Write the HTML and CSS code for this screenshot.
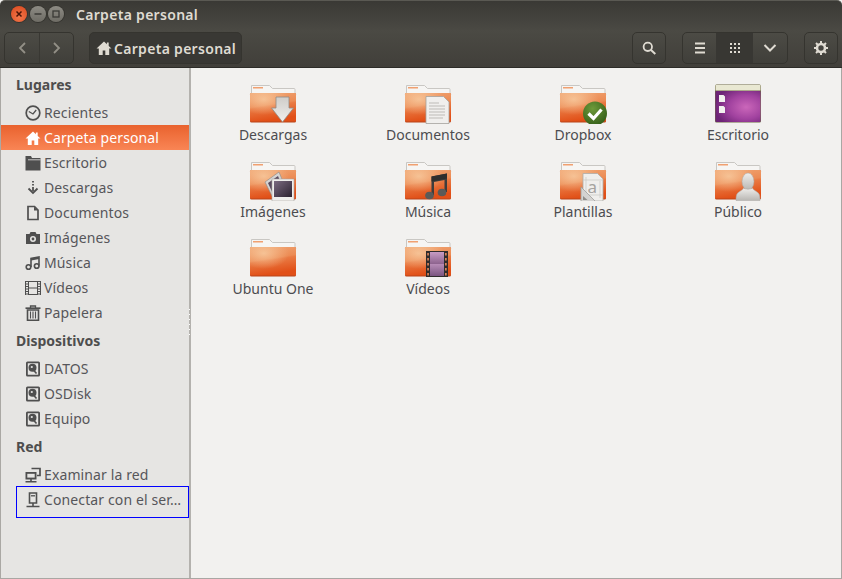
FILE: index.html
```html
<!DOCTYPE html>
<html lang="es">
<head>
<meta charset="utf-8">
<title>Carpeta personal</title>
<link rel="stylesheet" href="styles.css">
</head>
<body>
<svg class="defs" aria-hidden="true">
  <defs>
    <linearGradient id="fBody" x1="0" y1="0" x2=".25" y2="1">
      <stop offset="0" stop-color="#f0a674"/>
      <stop offset=".48" stop-color="#ec8b54"/>
      <stop offset=".54" stop-color="#e97a43"/>
      <stop offset="1" stop-color="#e14f17"/>
    </linearGradient>
    <radialGradient id="fGlow" cx=".3" cy=".22" r=".55">
      <stop offset="0" stop-color="#f8cda2" stop-opacity=".8"/>
      <stop offset="1" stop-color="#f8c79a" stop-opacity="0"/>
    </radialGradient>
    <radialGradient id="desk" cx=".68" cy=".52" r=".7">
      <stop offset="0" stop-color="#cb67ba"/>
      <stop offset=".55" stop-color="#a1429f"/>
      <stop offset="1" stop-color="#6d2476"/>
    </radialGradient>
    <linearGradient id="film" x1="0" y1="0" x2="0" y2="1">
      <stop offset="0" stop-color="#c79bc4"/>
      <stop offset=".48" stop-color="#8f6590"/>
      <stop offset=".52" stop-color="#b58ab5"/>
      <stop offset="1" stop-color="#7a5480"/>
    </linearGradient>
    <linearGradient id="photo" x1="0" y1="0" x2="1" y2="1">
      <stop offset="0" stop-color="#7b6a80"/>
      <stop offset="1" stop-color="#2b2230"/>
    </linearGradient>
    <linearGradient id="arrow" x1="0" y1="0" x2="0" y2="1">
      <stop offset="0" stop-color="#cfcdc9"/>
      <stop offset="1" stop-color="#f0efec"/>
    </linearGradient>
    <linearGradient id="bust" x1="0" y1="0" x2="0" y2="1">
      <stop offset="0" stop-color="#efeeec"/>
      <stop offset="1" stop-color="#b9b7b3"/>
    </linearGradient>
    <radialGradient id="green" cx=".4" cy=".3" r=".8">
      <stop offset="0" stop-color="#6e9a3a"/>
      <stop offset="1" stop-color="#2f5a16"/>
    </radialGradient>
    <symbol id="folder" viewBox="0 0 48 40">
      <path d="M2.500 1.500h18l3 3h21.500a1 1 0 0 1 1 1V12h-43.500z" fill="#f6f5f3" stroke="#c9c7c3"/>
      <rect x="4" y="3" width="10" height="1.500" fill="#f0a070"/>
      <rect x="1" y="9" width="46" height="29.500" rx="1.500" fill="#b8451a"/>
      <rect x="1" y="9" width="46" height="28.500" rx="1" fill="url(#fBody)"/>
      <rect x="1" y="9" width="46" height="28.500" rx="1" fill="url(#fGlow)"/>
    </symbol>
    <symbol id="i-clock" viewBox="0 0 16 16"><circle cx="8" cy="8" r="6.800" fill="none" stroke="currentColor" stroke-width="1.700"/><path d="M3.800 6.500 8 9l3.200-4" fill="none" stroke="currentColor" stroke-width="1.300"/></symbol>
    <symbol id="i-home" viewBox="0 0 16 16"><path d="M8 1.500 .5 8.500h2.300V15h3.900v-4.500h2.600V15h3.900V8.500h2.300l-2.800-2.600V2.500h-1.800v1.700z" fill="currentColor"/></symbol>
    <symbol id="i-folder" viewBox="0 0 16 16"><path d="M.5 1h5.500l1 2h8.500v12.500H.5z" fill="currentColor"/><path d="M3 4.800h12.500" stroke="#e6e5e3" stroke-width=".8"/></symbol>
    <symbol id="i-down" viewBox="0 0 16 16"><path d="M8 1v1.500M8 4v1.500" stroke="currentColor" stroke-width="1.800"/><path d="M8 7v4" stroke="currentColor" stroke-width="1.800"/><path d="m3.500 8.500 4.500 4.500 4.500-4.500" fill="none" stroke="currentColor" stroke-width="1.800"/></symbol>
    <symbol id="i-doc" viewBox="0 0 16 16"><path d="M3 1.500h6.500L13 5v9.500H3z" fill="none" stroke="currentColor" stroke-width="1.700"/><path d="M9 1.500V5.500h4" fill="currentColor"/></symbol>
    <symbol id="i-cam" viewBox="0 0 16 16"><path fill-rule="evenodd" d="M1 4h3.500l1-2h5l1 2H15v10H1zM8 6a3 3 0 1 0 0 6 3 3 0 0 0 0-6z" fill="currentColor"/><circle cx="8" cy="9" r="1.400" fill="currentColor"/></symbol>
    <symbol id="i-music" viewBox="0 0 16 16"><path d="M6 12V3.500l8-1.500v8.500" fill="none" stroke="currentColor" stroke-width="1.600"/><path d="M6 4.500l8-1.500" stroke="currentColor" stroke-width="2.200"/><circle cx="3.500" cy="12" r="2.300" fill="none" stroke="currentColor" stroke-width="1.600"/><circle cx="11.700" cy="11" r="2.300" fill="none" stroke="currentColor" stroke-width="1.600"/></symbol>
    <symbol id="i-film" viewBox="0 0 16 16"><path d="M.5 1v14M15.500 1v14M3.500 1v14M12.500 1v14M3.500 8h9M.5 1.500h3M12.500 1.500h3M.5 4h3M12.500 4h3M.5 6.500h3M12.500 6.500h3M.5 9h3M12.500 9h3M.5 11.500h3M12.500 11.500h3M.5 14h3M12.500 14h3M3.500 1.500h9M3.500 14.500h9" fill="none" stroke="currentColor" stroke-width="1"/></symbol>
    <symbol id="i-trash" viewBox="0 0 16 16"><path d="M.5 3.200h15" stroke="currentColor" stroke-width="1.700"/><path d="M5.500 3V1h5v2" fill="none" stroke="currentColor" stroke-width="1.300"/><path d="M2.500 5h11v10.300h-11z" fill="none" stroke="currentColor" stroke-width="1.600"/><path d="M5.500 6.500v7M8 6.500v7M10.500 6.500v7" stroke="currentColor" stroke-width="1.100"/></symbol>
    <symbol id="i-disk" viewBox="0 0 16 16"><path fill-rule="evenodd" d="M2.500.5h11a1.500 1.500 0 0 1 1.500 1.500v12a1.500 1.500 0 0 1-1.500 1.500h-11A1.500 1.500 0 0 1 1 14V2A1.500 1.500 0 0 1 2.500.5zm.3 1.800v11.400h10.400V2.300z" fill="currentColor"/><circle cx="7.500" cy="6.800" r="4" fill="currentColor"/><circle cx="6.800" cy="6" r="1.100" fill="#e6e5e3"/><path d="m8 8.500 3.500 4" stroke="currentColor" stroke-width="1.700"/></symbol>
    <symbol id="i-net" viewBox="0 0 16 16"><path d="M6.500 1.500H15v7h-3" fill="none" stroke="currentColor" stroke-width="1.700"/><path d="M.5 5h11v7.500H.5z" fill="currentColor"/><path d="M2.300 6.800h7.400v3.800H2.300z" fill="#e6e5e3"/><path d="M.5 14.800h11M6 12v3" stroke="currentColor" stroke-width="1.600"/></symbol>
    <symbol id="i-server" viewBox="0 0 16 16"><path d="M4.500 1h7v10h-7z" fill="none" stroke="currentColor" stroke-width="1.600"/><path d="M6 3.800h4" stroke="currentColor" stroke-width="1.300"/><path d="M8 11v3M1.500 14.500h13" stroke="currentColor" stroke-width="1.600"/></symbol>
  </defs>
</svg>

<div class="window">
  <header class="titlebar">
    <div class="win-buttons">
      <span class="wbtn close"><svg viewBox="0 0 16 16"><path d="m5.500 5.500 5 5m0-5-5 5" stroke="#4a1508" stroke-width="1.500"/></svg></span>
      <span class="wbtn"><svg viewBox="0 0 16 16"><path d="M4.500 8h7" stroke="#3b3a36" stroke-width="1.500"/></svg></span>
      <span class="wbtn"><svg viewBox="0 0 16 16"><rect x="5" y="5" width="6" height="6" fill="none" stroke="#3b3a36" stroke-width="1.300"/></svg></span>
    </div>
    <div class="title">Carpeta personal</div>
  </header>

  <nav class="toolbar">
    <div class="btn-group nav-group">
      <button class="tbtn nav"><svg viewBox="0 0 16 16"><path d="M11 3 6 8l5 5" fill="none" stroke="#928f86" stroke-width="1.800"/></svg></button>
      <button class="tbtn nav"><svg viewBox="0 0 16 16"><path d="m5 3 5 5-5 5" fill="none" stroke="#928f86" stroke-width="1.800"/></svg></button>
    </div>
    <button class="path-btn"><svg class="path-icon"><use href="#i-home"/></svg><span>Carpeta personal</span></button>
    <div class="spacer"></div>
    <div class="btn-group single"><button class="tbtn"><svg viewBox="0 0 16 16"><circle cx="6.800" cy="6.800" r="4.200" fill="none" stroke="#dfdbd2" stroke-width="1.800"/><path d="m10 10 4.300 4" stroke="#dfdbd2" stroke-width="2"/></svg></button></div>
    <div class="btn-group views">
      <button class="tbtn list"><svg viewBox="0 0 16 16"><path d="M3 3.500h10M3 8h10M3 12.500h10" stroke="#dfdbd2" stroke-width="2"/></svg></button>
      <button class="tbtn active"><svg viewBox="0 0 16 16"><path d="M3 3h2v2H3zM7 3h2v2H7zM11 3h2v2h-2zM3 7h2v2H3zM7 7h2v2H7zM11 7h2v2h-2zM3 11h2v2H3zM7 11h2v2H7zM11 11h2v2h-2z" fill="#dfdbd2"/></svg></button>
      <button class="tbtn"><svg viewBox="0 0 16 16"><path d="m2.500 5 5.500 5.500L13.500 5" fill="none" stroke="#dfdbd2" stroke-width="2"/></svg></button>
    </div>
    <div class="btn-group single"><button class="tbtn"><svg viewBox="0 0 16 16"><circle cx="8" cy="8" r="4" fill="none" stroke="#dfdbd2" stroke-width="2.600"/><path d="M8 1v3M8 12v3M1 8h3M12 8h3M3 3l2.200 2.200M10.800 10.800 13 13M13 3l-2.200 2.200M5.200 10.800 3 13" stroke="#dfdbd2" stroke-width="2"/></svg></button></div>
  </nav>

  <div class="content">
    <aside class="sidebar">
      <h2 class="sec">Lugares</h2>
      <a class="row"><svg class="ico"><use href="#i-clock"/></svg><span>Recientes</span></a>
      <a class="row selected"><svg class="ico"><use href="#i-home"/></svg><span>Carpeta personal</span></a>
      <a class="row"><svg class="ico"><use href="#i-folder"/></svg><span>Escritorio</span></a>
      <a class="row"><svg class="ico"><use href="#i-down"/></svg><span>Descargas</span></a>
      <a class="row"><svg class="ico"><use href="#i-doc"/></svg><span>Documentos</span></a>
      <a class="row"><svg class="ico"><use href="#i-cam"/></svg><span>Imágenes</span></a>
      <a class="row"><svg class="ico"><use href="#i-music"/></svg><span>Música</span></a>
      <a class="row"><svg class="ico"><use href="#i-film"/></svg><span>Vídeos</span></a>
      <a class="row"><svg class="ico"><use href="#i-trash"/></svg><span>Papelera</span></a>
      <h2 class="sec">Dispositivos</h2>
      <a class="row"><svg class="ico"><use href="#i-disk"/></svg><span>DATOS</span></a>
      <a class="row"><svg class="ico"><use href="#i-disk"/></svg><span>OSDisk</span></a>
      <a class="row"><svg class="ico"><use href="#i-disk"/></svg><span>Equipo</span></a>
      <h2 class="sec">Red</h2>
      <a class="row"><svg class="ico"><use href="#i-net"/></svg><span>Examinar la red</span></a>
      <a class="row marked"><svg class="ico"><use href="#i-server"/></svg><span>Conectar con el ser…</span><i class="mark"></i></a>
    </aside>
    <div class="grip"></div>

    <main class="files">
      <figure class="file">
        <svg class="ficon" viewBox="0 0 48 40"><use href="#folder"/><path d="M27 13h13v11h4.500L33.500 38 22.500 24H27z" fill="url(#arrow)" stroke="#8f8b85" stroke-width=".8"/></svg>
        <figcaption>Descargas</figcaption>
      </figure>
      <figure class="file">
        <svg class="ficon" viewBox="0 0 48 40"><use href="#folder"/><path d="M22 12.500h17.500l5.500 5.500v21.500H22z" fill="#f0efed" stroke="#a5a29d" stroke-width=".8"/><path d="M25 19h10M25 22h16M25 25h16M25 28h16M25 31h16M25 34h14" stroke="#bdbbb7" stroke-width="1"/></svg>
        <figcaption>Documentos</figcaption>
      </figure>
      <figure class="file">
        <svg class="ficon" viewBox="0 0 48 40"><use href="#folder"/><circle cx="36" cy="29.500" r="12" fill="url(#green)"/><path d="m29.500 29.500 5 5 8-9" fill="none" stroke="#fff" stroke-width="3.200"/></svg>
        <figcaption>Dropbox</figcaption>
      </figure>
      <figure class="file">
        <svg class="ficon" viewBox="0 0 48 40"><rect x="1" y=".5" width="46" height="38" rx="1.500" fill="#6f6a45"/><rect x="1.500" y="7" width="45" height="31" rx="1" fill="url(#desk)"/><rect x="1.500" y="1" width="45" height="5.500" fill="#e9e8d2"/><path d="M5 11h4.500l1.500 1.500V18H5zM5 22h4.500l1.500 1.500V29H5z" fill="#f2f0ee"/></svg>
        <figcaption>Escritorio</figcaption>
      </figure>

      <figure class="file">
        <svg class="ficon" viewBox="0 0 48 40"><use href="#folder"/><path d="m16 21 14-10 9 22-14 6z" fill="#d6d4d2" stroke="#8a8784" stroke-width=".6"/><path d="m19 22 10-7 6 15-10 5z" fill="#5a4a5e"/><rect x="23" y="18" width="22" height="22" fill="#efeeec" stroke="#a9a6a2" stroke-width=".6"/><rect x="25" y="20" width="18" height="16" fill="url(#photo)"/></svg>
        <figcaption>Imágenes</figcaption>
      </figure>
      <figure class="file">
        <svg class="ficon" viewBox="0 0 48 40"><use href="#folder"/><path d="M27.500 34V15.500l15.500-3V31h-2.500V19l-10.500 2V34z" fill="#3f3d3c"/><path d="M27.500 15.500l15.500-3v5l-15.500 3z" fill="#2f2e2d"/><ellipse cx="25.500" cy="34.500" rx="4.300" ry="3.800" fill="#5b5a58"/><ellipse cx="38" cy="31.500" rx="4.300" ry="3.800" fill="#5b5a58"/></svg>
        <figcaption>Música</figcaption>
      </figure>
      <figure class="file">
        <svg class="ficon" viewBox="0 0 48 40"><use href="#folder"/><path d="M24 12.500h14.500l5.500 5.500v22H24z" fill="#efeeec" stroke="#aeaca8" stroke-width=".8"/><path d="M27 16v21M41 20v17M24 19h20M24 34h20" stroke="#c8c7c4" stroke-width=".7"/><text class="tpl-a" x="28.500" y="32">a</text><path d="M22 26 36.500 40.500H22z" fill="#d4d3d1" stroke="#a09e9a" stroke-width=".8"/><path d="M24 35v4h4.500z" fill="#8f8d89"/></svg>
        <figcaption>Plantillas</figcaption>
      </figure>
      <figure class="file">
        <svg class="ficon" viewBox="0 0 48 40"><use href="#folder"/><ellipse cx="34" cy="20.500" rx="6" ry="8.500" fill="url(#bust)" stroke="#a8a6a2" stroke-width=".5"/><path d="M29.500 27c-1 3-6 3.500-7 7-.5 2-.5 4-.5 5.500h24c0-1.500 0-3.500-.5-5.500-1-3.500-6-4-7-7-1.500 1.500-7.500 1.500-9 0z" fill="url(#bust)" stroke="#a8a6a2" stroke-width=".5"/></svg>
        <figcaption>Público</figcaption>
      </figure>

      <figure class="file">
        <svg class="ficon" viewBox="0 0 48 40"><use href="#folder"/></svg>
        <figcaption>Ubuntu One</figcaption>
      </figure>
      <figure class="file">
        <svg class="ficon" viewBox="0 0 48 40"><use href="#folder"/><rect x="22" y="13" width="22" height="26" fill="#2f2c2c"/><rect x="26" y="14" width="14" height="24" fill="url(#film)"/><path d="M23.200 15h1.700v2.500h-1.700zM23.200 20h1.700v2.500h-1.700zM23.200 25h1.700v2.500h-1.700zM23.200 30h1.700v2.500h-1.700zM23.200 35h1.700v2.500h-1.700zM41 15h1.700v2.500H41zM41 20h1.700v2.500H41zM41 25h1.700v2.500H41zM41 30h1.700v2.500H41zM41 35h1.700v2.500H41z" fill="#d8835a"/></svg>
        <figcaption>Vídeos</figcaption>
      </figure>
    </main>
  </div>
</div>
</body>
</html>
```

FILE: styles.css
```css
* { box-sizing: border-box; }

html, body {
  margin: 0;
  height: 100%;
  overflow: hidden;
  background: #f2f1ef;
}

.defs {
  position: absolute;
  width: 0;
  height: 0;
}

.window {
  display: flex;
  flex-direction: column;
  height: 579px;
  width: 842px;
  font-family: "Noto Sans", sans-serif;
  font-size: 14px;
}

.titlebar {
  height: 30px;
  display: flex;
  align-items: center;
  padding-left: 11px;
  background: linear-gradient(#3a3935, #4a4943);
  border-top: 1px solid #5a5953;
  border-radius: 5px 5px 0 0;
}

.win-buttons {
  display: flex;
  gap: 2.5px;
  margin-top: -3px;
}

.wbtn {
  width: 16px;
  height: 16px;
  border-radius: 50%;
  background: linear-gradient(#8d8b84, #6e6c65);
  box-shadow: 0 0 0 1px #35342f;
}

.wbtn svg {
  display: block;
  width: 16px;
  height: 16px;
}

.wbtn.close {
  background: radial-gradient(circle at 50% 70%, #f3764a, #d9481d);
}

.title {
  margin-left: 12px;
  margin-top: -3px;
  font-weight: 600;
  color: #dfdbd2;
  letter-spacing: .3px;
}

.toolbar {
  height: 38px;
  display: flex;
  align-items: flex-start;
  padding: 2px 4px 0;
  background: linear-gradient(#4b4a44, #413f3a);
  border-bottom: 1px solid #2d2c28;
}

.spacer { flex: 1; }

.btn-group {
  display: flex;
  height: 32px;
  border: 1px solid #35342f;
  border-radius: 5px;
  background: linear-gradient(#4c4b45, #403f3a);
  overflow: hidden;
}

.tbtn {
  width: 34px;
  flex: none;
  padding: 0;
  border: 0;
  background: none;
  display: flex;
  align-items: center;
  justify-content: center;
}

.tbtn svg {
  width: 16px;
  height: 16px;
}

.tbtn.list { width: 33px; }
.tbtn.nav + .tbtn.nav { border-left: 1px solid #393833; }

.tbtn.active {
  width: 37px;
  background: #383733;
}

.views {
  width: 106px;
  margin-left: 16px;
}

.single {
  width: 34px;
}

.single .tbtn { width: 32px; }

.views + .single { margin-left: 16px; }

.path-btn {
  margin-left: 15px;
  height: 32px;
  width: 153px;
  padding: 0 0 0 6px;
  display: flex;
  align-items: center;
  gap: 2px;
  border: 1px solid #35342f;
  border-radius: 5px;
  background: #393834;
  color: #dfdbd2;
  font: 600 14px "Noto Sans", sans-serif;
  letter-spacing: .3px;
}

.path-icon {
  width: 16px;
  height: 16px;
  flex: none;
}

.content {
  flex: 1;
  min-height: 0;
  display: flex;
  border-bottom: 1px solid #a9a7a3;
  border-right: 1px solid #a9a7a3;
}

.sidebar {
  width: 189px;
  flex: none;
  padding-top: 1px;
  background: #e6e5e3;
  border-left: 1px solid #aaa8a4;
  color: #56565a;
  letter-spacing: .12px;
}

.sec {
  height: 31px;
  margin: 0;
  padding-left: 15px;
  display: flex;
  align-items: center;
  font-size: 14px;
  font-weight: 700;
  color: #4e4e4e;
  letter-spacing: 0;
}

.row {
  height: 25px;
  display: flex;
  align-items: center;
  gap: 3px;
  padding-left: 24px;
  position: relative;
  white-space: nowrap;
}

.ico {
  width: 16px;
  height: 16px;
  flex: none;
  color: #4f4f4f;
}

.row.selected {
  background: linear-gradient(#e9622e, #f98555);
  color: #fff;
}

.row.selected .ico { color: #fff; }

.mark {
  position: absolute;
  left: 15px;
  right: 0;
  top: -1px;
  height: 32px;
  border: 1px solid #0000ff;
}

.grip {
  width: 2px;
  flex: none;
  background: #b4b2ae;
  position: relative;
}

.grip::before {
  content: "";
  position: absolute;
  left: 0;
  top: 241px;
  width: 1px;
  height: 30px;
  background: repeating-linear-gradient(#fff 0 1px, transparent 1px 5px);
}

.files {
  flex: 1;
  display: grid;
  grid-template-columns: repeat(4, 155px);
  grid-auto-rows: 77px;
  padding: 16px 0 0 4px;
  background: #f2f1ef;
  color: #4c4c50;
}

.file {
  margin: 0;
  display: flex;
  flex-direction: column;
  align-items: center;
}

.ficon {
  width: 48px;
  height: 40px;
  flex: none;
}

.file figcaption {
  line-height: 20px;
  padding-top: 1px;
  padding-left: 1px;
  white-space: nowrap;
}

.tpl-a {
  font: 17px "Noto Sans", sans-serif;
  fill: #a5a3a0;
}
```
